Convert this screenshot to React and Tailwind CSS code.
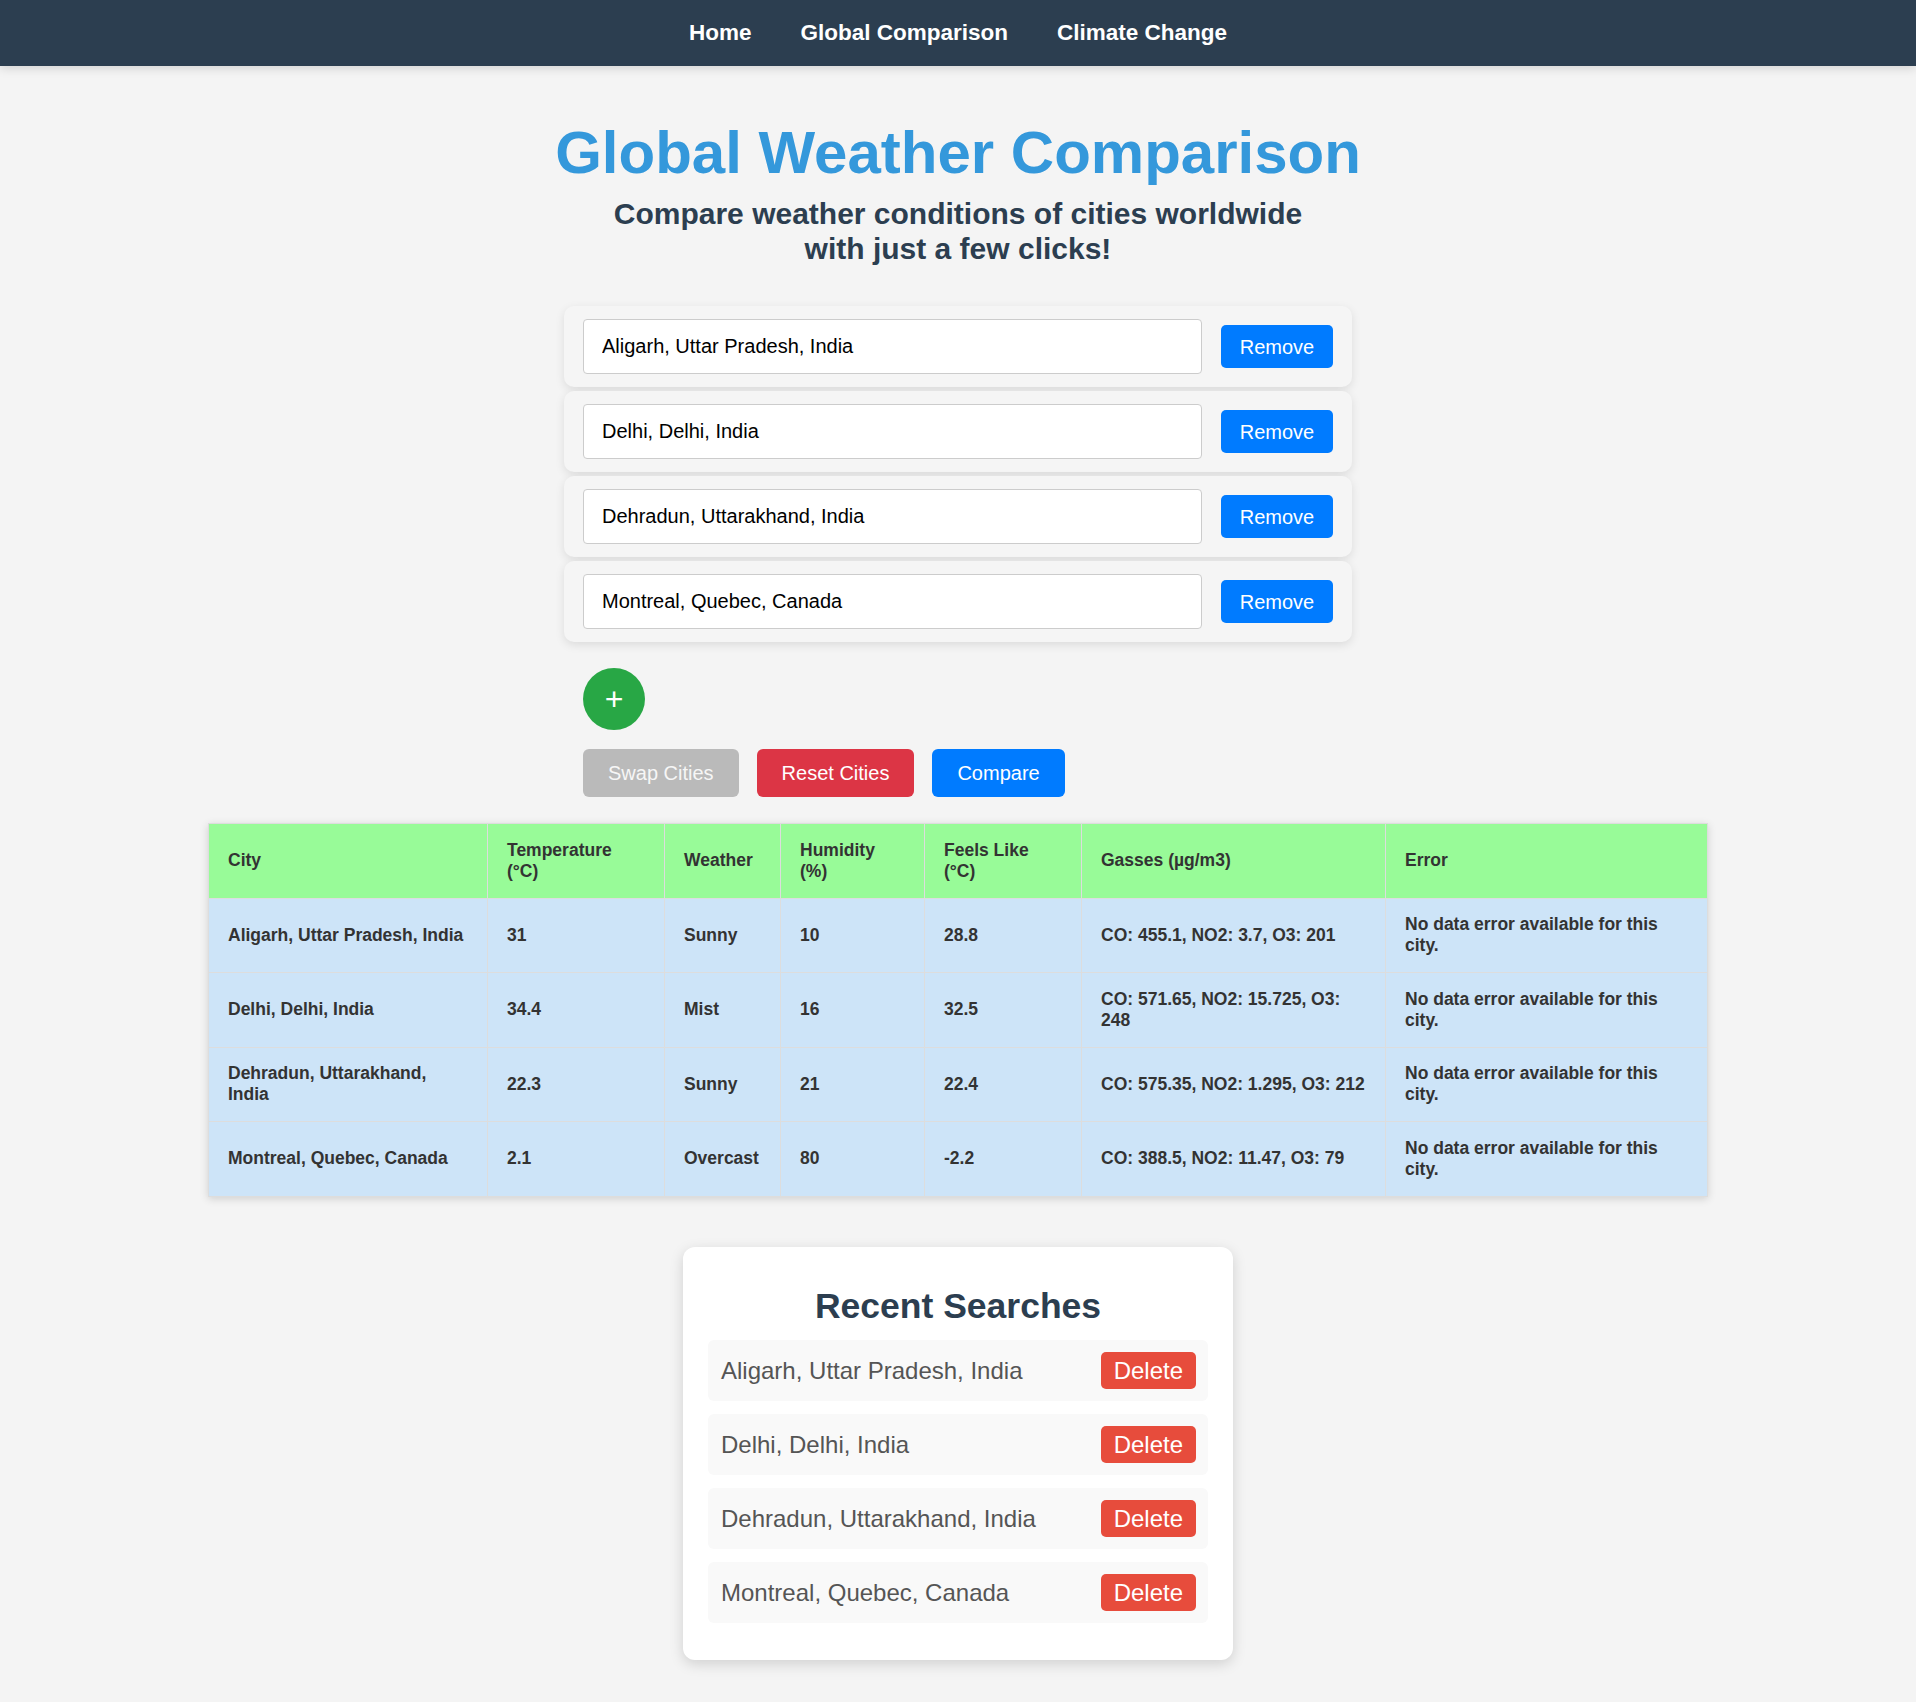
import React, { useState } from 'react';

const cities = [
  'Aligarh, Uttar Pradesh, India',
  'Delhi, Delhi, India',
  'Dehradun, Uttarakhand, India',
  'Montreal, Quebec, Canada',
];

const rows = [
  { city: 'Aligarh, Uttar Pradesh, India', temp: '31', weather: 'Sunny', humidity: '10', feels: '28.8', gas: 'CO: 455.1, NO2: 3.7, O3: 201' },
  { city: 'Delhi, Delhi, India', temp: '34.4', weather: 'Mist', humidity: '16', feels: '32.5', gas: 'CO: 571.65, NO2: 15.725, O3: 248' },
  { city: 'Dehradun, Uttarakhand, India', temp: '22.3', weather: 'Sunny', humidity: '21', feels: '22.4', gas: 'CO: 575.35, NO2: 1.295, O3: 212' },
  { city: 'Montreal, Quebec, Canada', temp: '2.1', weather: 'Overcast', humidity: '80', feels: '-2.2', gas: 'CO: 388.5, NO2: 11.47, O3: 79' },
];

const headers = ['City', 'Temperature (°C)', 'Weather', 'Humidity (%)', 'Feels Like (°C)', 'Gasses (µg/m3)', 'Error'];
const colWidths = ['w-[279px]', 'w-[177px]', 'w-[116px]', 'w-[144px]', 'w-[157px]', 'w-[304px]', 'w-[322px]'];

const cellCls = 'border border-[#dddddd] px-[19px] py-[15.75px] text-left align-middle';

const App = () => {
  const [inputs, setInputs] = useState(cities);
  const [recent, setRecent] = useState(cities);

  const updateInput = (i, value) => {
    setInputs(inputs.map((c, idx) => (idx === i ? value : c)));
  };

  return (
    <div className="min-h-screen bg-[#f4f4f4] font-['Liberation_Sans',Arial,sans-serif] pb-[43px]">
      <nav className="h-[66px] bg-[#2c3e50] flex items-center justify-center gap-[49px] shadow-[0_2px_10px_rgba(0,0,0,0.15)]">
        {['Home', 'Global Comparison', 'Climate Change'].map((link) => (
          <a key={link} href="#" className="text-white font-bold text-[22.5px]">
            {link}
          </a>
        ))}
      </nav>

      <h1 className="mt-[52px] text-center text-[60px] font-bold leading-[1.15] text-[#3498db]">
        Global Weather Comparison
      </h1>
      <p className="mx-auto mt-[10px] max-w-[700px] text-center text-[30px] font-bold leading-[1.15] text-[#2c3e50]">
        Compare weather conditions of cities worldwide with just a few clicks!
      </p>

      <div className="mx-auto mt-[40px] w-[788px] flex flex-col gap-[4px]">
        {inputs.map((city, i) => (
          <div
            key={i}
            className="flex items-center gap-[19px] rounded-[10px] bg-[#f5f5f5] px-[19px] py-[13px] shadow-[0_3px_10px_rgba(0,0,0,0.1)]"
          >
            <input
              value={city}
              onChange={(e) => updateInput(i, e.target.value)}
              className="h-[55px] flex-1 rounded-[4px] border border-[#cccccc] bg-white px-[18px] text-[20px] text-black outline-none"
            />
            <button className="h-[43px] w-[112px] rounded-[5px] bg-[#007bff] text-[20px] text-white">
              Remove
            </button>
          </div>
        ))}
      </div>

      <div className="mx-auto w-[788px] px-[19px]">
        <button className="mt-[26px] flex h-[62px] w-[62px] items-center justify-center rounded-full bg-[#28a745] text-[32px] leading-none text-white">
          +
        </button>
        <div className="mt-[19px] flex gap-[18px]">
          <button className="h-[48px] rounded-[6px] bg-[#bababa] px-[25px] text-[20px] text-[#f6f6f6]">Swap Cities</button>
          <button className="h-[48px] rounded-[6px] bg-[#dc3545] px-[25px] text-[20px] text-white">Reset Cities</button>
          <button className="h-[48px] rounded-[6px] bg-[#007bff] px-[25px] text-[20px] text-white">Compare</button>
        </div>
      </div>

      <table className="mx-auto mt-[26px] w-[1499px] table-fixed border-collapse text-[17.5px] font-bold leading-[21px] text-[#333333] shadow-[0_2px_8px_rgba(0,0,0,0.15)]">
        <colgroup>
          {colWidths.map((w, i) => (
            <col key={i} className={w} />
          ))}
        </colgroup>
        <thead>
          <tr className="bg-[#98fb98]">
            {headers.map((h) => (
              <th key={h} className={cellCls}>
                {h}
              </th>
            ))}
          </tr>
        </thead>
        <tbody>
          {rows.map((r) => (
            <tr key={r.city} className="bg-[#cde4f8]">
              <td className={cellCls}>{r.city}</td>
              <td className={cellCls}>{r.temp}</td>
              <td className={cellCls}>{r.weather}</td>
              <td className={cellCls}>{r.humidity}</td>
              <td className={cellCls}>{r.feels}</td>
              <td className={cellCls}>{r.gas}</td>
              <td className={cellCls}>No data error available for this city.</td>
            </tr>
          ))}
        </tbody>
      </table>

      <div className="mx-auto mt-[50px] w-[550px] rounded-[12px] bg-white px-[25px] pt-[25px] pb-[24px] shadow-[0_4px_14px_rgba(0,0,0,0.15)]">
        <h2 className="my-[14px] text-center text-[35.5px] font-bold leading-[1.15] text-[#2c3e50]">Recent Searches</h2>
        <ul className="flex flex-col gap-[13px] pb-[13px]">
          {recent.map((city) => (
            <li key={city} className="flex h-[61px] items-center justify-between rounded-[6px] bg-[#f9f9f9] pl-[13px] pr-[12px]">
              <span className="text-[24px] text-[#555555]">{city}</span>
              <button
                onClick={() => setRecent(recent.filter((c) => c !== city))}
                className="rounded-[5px] bg-[#e74c3c] px-[13px] py-[5px] text-[24px] leading-[27px] text-white"
              >
                Delete
              </button>
            </li>
          ))}
        </ul>
      </div>
    </div>
  );
};

export default App;
